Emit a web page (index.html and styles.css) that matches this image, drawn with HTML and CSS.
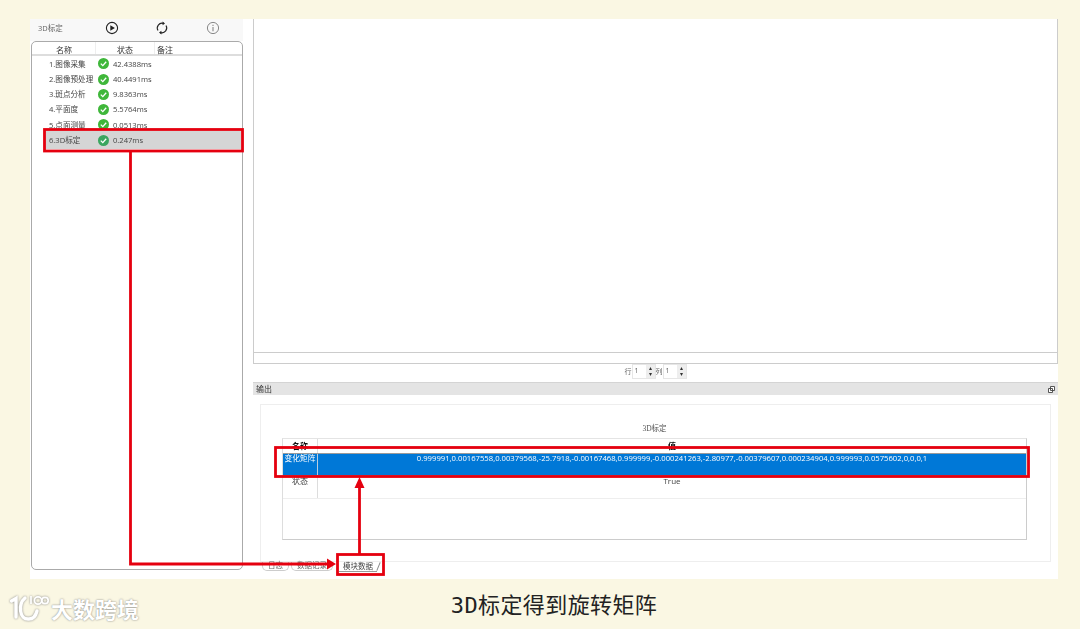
FILE: index.html
```html
<!DOCTYPE html>
<html>
<head>
    <title>3D标定</title>
    <link rel="stylesheet" href="styles.css">
</head>
<body>
    <div class="screen">
        <div class="left-side">
            <div class="toolbar">
                <span class="toolbar-name">3D标定</span>
                <svg class="tool play" width="14" height="14" viewBox="0 0 14 14"><circle cx="7" cy="7" r="5.6" fill="none" stroke="#222" stroke-width="1.1"/><path d="M5.3 4.2 9.9 7 5.3 9.8Z" fill="#222"/></svg>
                <svg class="tool sync" width="14" height="14" viewBox="0 0 14 14"><path d="M3 9.5A4.8 4.8 0 0 1 8.5 2.4M11 4.5A4.8 4.8 0 0 1 5.5 11.6" fill="none" stroke="#222" stroke-width="1.1"/><path d="M7.6 .6 10 2.6 7.6 4.2ZM6.4 13.4 4 11.4 6.4 9.8Z" fill="#222"/></svg>
                <svg class="tool info" width="14" height="14" viewBox="0 0 14 14"><circle cx="7" cy="7" r="5.6" fill="none" stroke="#888" stroke-width="1"/><path d="M7 6v4.2M7 3.8v1.1" stroke="#888" stroke-width="1.1"/></svg>
            </div>
            <div class="tree">
                <div class="tree-head">
                    <div class="col-name">名称</div>
                    <div class="col-state">状态</div>
                    <div class="col-note">备注</div>
                </div>
                <div class="tree-row">
                    <span class="row-name">1.图像采集</span>
                    <svg class="ok" width="11" height="11" viewBox="0 0 11 11"><circle cx="5.5" cy="5.5" r="5.5" fill="#3fb73a"/><path d="M2.8 5.6 4.8 7.6 8.2 3.7" fill="none" stroke="#fff" stroke-width="1.3"/></svg>
                    <span>42.4388ms</span>
                </div>
                <div class="tree-row">
                    <span class="row-name">2.图像预处理</span>
                    <svg class="ok" width="11" height="11" viewBox="0 0 11 11"><circle cx="5.5" cy="5.5" r="5.5" fill="#3fb73a"/><path d="M2.8 5.6 4.8 7.6 8.2 3.7" fill="none" stroke="#fff" stroke-width="1.3"/></svg>
                    <span>40.4491ms</span>
                </div>
                <div class="tree-row">
                    <span class="row-name">3.斑点分析</span>
                    <svg class="ok" width="11" height="11" viewBox="0 0 11 11"><circle cx="5.5" cy="5.5" r="5.5" fill="#3fb73a"/><path d="M2.8 5.6 4.8 7.6 8.2 3.7" fill="none" stroke="#fff" stroke-width="1.3"/></svg>
                    <span>9.8363ms</span>
                </div>
                <div class="tree-row">
                    <span class="row-name">4.平面度</span>
                    <svg class="ok" width="11" height="11" viewBox="0 0 11 11"><circle cx="5.5" cy="5.5" r="5.5" fill="#3fb73a"/><path d="M2.8 5.6 4.8 7.6 8.2 3.7" fill="none" stroke="#fff" stroke-width="1.3"/></svg>
                    <span>5.5764ms</span>
                </div>
                <div class="tree-row">
                    <span class="row-name">5.点面测量</span>
                    <svg class="ok" width="11" height="11" viewBox="0 0 11 11"><circle cx="5.5" cy="5.5" r="5.5" fill="#3fb73a"/><path d="M2.8 5.6 4.8 7.6 8.2 3.7" fill="none" stroke="#fff" stroke-width="1.3"/></svg>
                    <span>0.0513ms</span>
                </div>
                <div class="tree-row selected">
                    <span class="row-name">6.3D标定</span>
                    <svg class="ok" width="11" height="11" viewBox="0 0 11 11"><circle cx="5.5" cy="5.5" r="5.5" fill="#3aa65f"/><path d="M2.8 5.6 4.8 7.6 8.2 3.7" fill="none" stroke="#fff" stroke-width="1.3"/></svg>
                    <span>0.247ms</span>
                </div>
            </div>
        </div>

        <div class="right-side">
            <div class="image-box">
                <div class="image-area"></div>
                <div class="image-scroll"></div>
            </div>
            <div class="spin-row">
                <span>行</span>
                <div class="spin"><span class="spin-val">1</span><span class="spin-btn">▴<br>▾</span></div>
                <span>列</span>
                <div class="spin"><span class="spin-val">1</span><span class="spin-btn">▴<br>▾</span></div>
            </div>
            <div class="output-head">
                <span>输出</span>
                <svg width="7" height="7" viewBox="0 0 7 7"><path d="M2.5 .5h4v4h-4zM.5 2.5h4v4h-4z" fill="#fff" stroke="#444" stroke-width=".9"/></svg>
            </div>
            <div class="output-body">
                <div class="panel">
                    <div class="panel-title">3D标定</div>
                    <div class="grid">
                        <div class="grid-row grid-head"><div class="cell-key">名称</div><div class="cell-val">值</div></div>
                        <div class="grid-row grid-active"><div class="cell-key">变化矩阵</div><div class="cell-val">0.999991,0.00167558,0.00379568,-25.7918,-0.00167468,0.999999,-0.000241263,-2.80977,-0.00379607,0.000234904,0.999993,0.0575602,0,0,0,1</div></div>
                        <div class="grid-row"><div class="cell-key">状态</div><div class="cell-val">True</div></div>
                    </div>
                </div>
                <div class="tabs">
                    <span class="tab">日志</span>
                    <span class="tab">数据记录</span>
                    <span class="tab tab-on">模块数据</span>
                </div>
            </div>
        </div>
    </div>

    <div class="footer">
        <div class="mark">
            <svg width="40" height="28" viewBox="0 0 40 28"><g fill="none" stroke="#fff" stroke-width="3.4" stroke-linecap="round"><path d="M2.5 7 7 4.5V23"/><path d="M16 4C9 10 10 26 20 25C25 25 27 21 28 17"/></g><g fill="none" stroke="#fff" stroke-width="1.7"><path d="M22 2V10"/><circle cx="29" cy="6.5" r="3.6"/><circle cx="36" cy="6.5" r="3.2"/></g></svg>
            <span class="mark-text">大数跨境</span>
        </div>
        <div class="caption">3D标定得到旋转矩阵</div>
    </div>

    <!-- red marks drawn on top of the screenshot -->
    <svg class="marks" width="1080" height="629" viewBox="0 0 1080 629">
        <g fill="none" stroke="#e5000f" stroke-width="2.8">
            <rect x="44.5" y="129.5" width="198" height="21.5"/>
            <rect x="275.5" y="447.5" width="753" height="29"/>
            <rect x="337.5" y="554.5" width="46" height="20"/>
            <path d="M130.5 151V564H328"/>
            <path d="M359.5 554V486"/>
        </g>
        <path d="M327 558.5 336 564 327 569.5ZM354.5 488 359.5 477 364.5 488Z" fill="#e5000f"/>
    </svg>
</body>
</html>
```

FILE: styles.css
```css
body {
    margin: 0;
    width: 1080px;
    height: 629px;
    overflow: hidden;
    background: #faf7e3;
    font-family: "Open Sans", "Noto Sans CJK SC", sans-serif;
    font-size: 8px;
    color: #444;
    padding-top: 19px;
    box-sizing: border-box;
}

.screen {
    display: flex;
    width: 1028px;
    height: 560px;
    margin-left: 30px;
    background: #fff;
    filter: blur(0.35px);
}

/* left side */
.left-side {
    width: 223px;
    flex: none;
    display: flex;
    flex-direction: column;
}
.toolbar {
    display: flex;
    align-items: center;
    height: 22px;
    padding-bottom: 4px;
    box-sizing: border-box;
    width: 213px;
    flex: none;
    background: #f8f8f8;
}
.toolbar-name {
    margin-left: 8px;
    width: 67px;
    font-size: 7.5px;
    line-height: 10px;
    color: #666;
}
.tool { flex: none; }
.play { margin-right: 36px; }
.sync { margin-right: 37px; }

.tree {
    width: 210px;
    height: 527px;
    margin-left: 1px;
    border: 1px solid #aaa;
    border-radius: 5px;
}
.tree-head {
    display: flex;
    height: 12px;
    line-height: 15px;
    border-bottom: 2px solid #ddd;
    color: #333;
}
.col-name { width: 64px; padding-left: 24px; box-sizing: border-box; border-right: 1px solid #eee; }
.col-state { width: 59px; padding-left: 21px; box-sizing: border-box; border-right: 1px solid #eee; }
.col-note { padding-left: 2px; }
.tree-row {
    display: flex;
    align-items: center;
    box-sizing: border-box;
    height: 15.2px;
    line-height: 10px;
    font-size: 7.6px;
    margin-left: 17px;
    margin-right: 1px;
    padding-top: 0.5px;
}
.row-name { width: 49px; white-space: nowrap; }
.ok { margin-right: 4px; flex: none; }
.selected {
    height: 18px;
    margin-top: -1px;
    margin-left: 13px;
    padding-left: 4px;
    background: #d5d5d5;
}

/* right side */
.right-side {
    width: 805px;
    display: flex;
    flex-direction: column;
}
.image-box {
    height: 344px;
    flex: none;
    border: 1px solid #ccc;
    border-top: none;
    display: flex;
    flex-direction: column;
}
.image-area { height: 333px; border-bottom: 1px solid #ccc; }
.image-scroll { height: 10px; }

.spin-row {
    display: flex;
    justify-content: center;
    align-items: center;
    height: 15px;
    flex: none;
    font-size: 7px;
    line-height: 9px;
    color: #666;
}
.spin {
    display: flex;
    width: 24px;
    height: 15px;
    border: 1px solid #e6e6e6;
    box-sizing: border-box;
}
.spin-val { flex: 1; padding-left: 2px; line-height: 12px; }
.spin-btn {
    width: 9px;
    background: #eee;
    font-size: 6px;
    line-height: 6px;
    text-align: center;
    color: #333;
}

.output-head {
    display: flex;
    justify-content: space-between;
    align-items: center;
    height: 13px;
    flex: none;
    margin-top: 3px;
    padding: 0 3px;
    background: #e4e4e4;
    border-top: 1px solid #d4d4d4;
    box-sizing: border-box;
    line-height: 10px;
    color: #333;
}

.output-body {
    flex: 1;
    padding: 9px 7px 0;
    display: flex;
    flex-direction: column;
}
.panel {
    height: 158px;
    flex: none;
    border: 1px solid #eee;
    box-sizing: border-box;
    padding: 17px 23px 0 21px;
}
.panel-title {
    height: 16px;
    line-height: 14px;
    text-align: center;
    font-family: "Liberation Serif", "Noto Sans CJK SC", serif;
    font-size: 7.5px;
    color: #555;
}
.grid {
    height: 102px;
    border-top: 1px solid #e4e4e4;
    border-left: 1px solid #ddd;
    border-right: 1px solid #ccc;
    border-bottom: 1px solid #ccc;
    box-sizing: border-box;
}
.grid-row {
    display: flex;
    height: 23px;
    line-height: 9px;
    border-bottom: 1px solid #eee;
    box-sizing: border-box;
    text-align: center;
}
.cell-key { width: 35px; box-sizing: border-box; flex: none; border-right: 1px solid #ddd; }
.cell-val { flex: 1; white-space: nowrap; }
.grid-head {
    height: 14px;
    line-height: 14px;
    font-weight: bold;
    color: #111;
    border-bottom: none;
}
.grid-active {
    background: #0078d7;
    color: #fff;
    font-size: 7.7px;
    line-height: 8px;
    border: 1px solid #9a9a9a;
    border-left: none;
    border-right: none;
}
.grid-active .cell-key { border-right-color: #bcd; }

.tabs {
    display: flex;
    padding-left: 2px;
    gap: 2px;
    font-size: 7.5px;
    color: #666;
}
.tab {
    padding: 0 5px;
    height: 8px;
    line-height: 7px;
    border: 1px solid #ccc;
    border-top: none;
    border-radius: 0 0 5px 5px;
    background: #fff;
    white-space: nowrap;
}
.tab-on {
    margin-left: 4px;
    padding: 0 4px;
    height: 9px;
    line-height: 8px;
    color: #444;
    border: none;
    border-bottom: 1px solid #999;
    border-radius: 0;
    position: relative;
}
.tab-on::after {
    content: "";
    position: absolute;
    right: -2px;
    top: 0;
    height: 9px;
    border-right: 1px solid #888;
    transform: rotate(22deg);
}

/* area under the screenshot */
.footer {
    display: flex;
    align-items: center;
    height: 50px;
}
.mark {
    display: flex;
    align-items: center;
    gap: 2px;
    width: 344px;
    flex: none;
    padding-left: 9px;
    padding-top: 7px;
    box-sizing: border-box;
}
.mark svg { filter: drop-shadow(0 0 1px #888); }
.mark-text {
    font-family: "Noto Sans CJK SC", sans-serif;
    font-weight: 700;
    font-size: 22px;
    color: #fff;
    text-shadow: 0 0 2px #777;
    white-space: nowrap;
}
.caption {
    width: 420px;
    text-align: center;
    font-family: "DejaVu Sans Mono", "Noto Sans CJK SC", monospace;
    font-size: 22px;
    line-height: 30px;
    letter-spacing: 0.4px;
    color: #222;
    padding-top: 4px;
}

.marks {
    position: absolute;
    left: 0;
    top: 0;
}
```
